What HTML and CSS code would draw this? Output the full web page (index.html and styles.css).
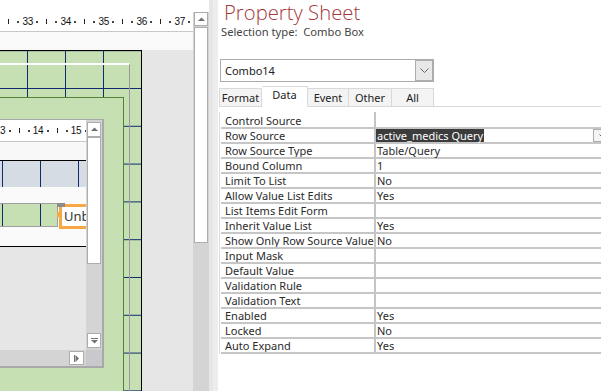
FILE: index.html
```html
<!DOCTYPE html>
<html>
<head>
<meta charset="utf-8">
<link rel="stylesheet" href="styles.css">
</head>
<body>
<div class="app">
  <div class="designer">
    <div class="topstrip"></div>
    <div class="dbody">
      <div class="dmain">
        <div class="ruler main-ruler">
          <span class="rc rstart"><i class="tk"></i></span><span class="rc"><i class="dt"></i></span><span class="rc num">33</span><span class="rc"><i class="dt"></i></span>
          <span class="rc"><i class="tk"></i></span><span class="rc"><i class="dt"></i></span><span class="rc num">34</span><span class="rc"><i class="dt"></i></span>
          <span class="rc"><i class="tk"></i></span><span class="rc"><i class="dt"></i></span><span class="rc num">35</span><span class="rc"><i class="dt"></i></span>
          <span class="rc"><i class="tk"></i></span><span class="rc"><i class="dt"></i></span><span class="rc num">36</span><span class="rc"><i class="dt"></i></span>
          <span class="rc"><i class="tk"></i></span><span class="rc"><i class="dt"></i></span><span class="rc num">37</span><span class="rc"><i class="dt"></i></span>
        </div>
        <div class="hdrbar"></div>
        <div class="canvasrow">
          <div class="canvas">
            <div class="boxb">
              <div class="boxc">
                <div class="subwin">
                  <div class="swtop">
                    <div class="swcontent">
                      <div class="ruler sub-ruler">
                        <span class="rc rstart"><i class="tk"></i></span><span class="rc"><i class="dt"></i></span><span class="rc num">13</span><span class="rc"><i class="dt"></i></span>
                        <span class="rc"><i class="tk"></i></span><span class="rc"><i class="dt"></i></span><span class="rc num">14</span><span class="rc"><i class="dt"></i></span>
                        <span class="rc"><i class="tk"></i></span><span class="rc"><i class="dt"></i></span><span class="rc num">15</span><span class="rc"><i class="dt"></i></span>
                      </div>
                      <div class="swhdr"></div>
                      <div class="swband"></div>
                      <div class="swgap"></div>
                      <div class="swctl">
                        <div class="lbl"></div>
                        <div class="txtbox">Unbound</div>
                        <span class="hmove"></span>
                        <span class="hleft"></span>
                      </div>
                      <div class="swgap2"></div>
                      <div class="swempty"></div>
                    </div>
                    <div class="vsb sub">
                      <div class="sbtn"><svg width="7" height="5" viewBox="0 0 7 5"><path d="M0 4 L3.5 0.5 L7 4 Z" fill="#707070"/></svg></div>
                      <div class="thumb subthumb"></div>
                      <div class="track"></div>
                      <div class="sbtn"><svg width="7" height="6" viewBox="0 0 7 6"><rect x="0" y="0" width="7" height="1" fill="#707070"/><path d="M0 2 L7 2 L3.5 5.5 Z" fill="#707070"/></svg></div>
                    </div>
                  </div>
                  <div class="swbottom">
                    <div class="hsb">
                      <div class="htrack"></div>
                      <div class="sbtn hbtn"><svg width="5" height="7" viewBox="0 0 5 7"><rect x="0" y="0" width="1" height="7" fill="#707070"/><path d="M1.5 0 L5 3.5 L1.5 7 Z" fill="#707070"/></svg></div>
                    </div>
                    <div class="corner"></div>
                  </div>
                </div>
              </div>
            </div>
          </div>
          <div class="outside"></div>
        </div>
      </div>
      <div class="vsb mainsb">
        <div class="sbtn"><svg width="7" height="5" viewBox="0 0 7 5"><path d="M0 4 L3.5 0.5 L7 4 Z" fill="#707070"/></svg></div>
        <div class="thumb mainthumb"></div>
        <div class="track"></div>
      </div>
    </div>
  </div>
  <div class="splitter"></div>
  <div class="props">
    <div class="ptitle">Property Sheet</div>
    <div class="seltype">Selection type:&nbsp; Combo Box</div>
    <div class="combo">
      <span class="ctext">Combo14</span>
      <span class="cbtn"><svg width="9" height="5" viewBox="0 0 9 5"><path d="M0.5 0.5 L4.5 4.5 L8.5 0.5" fill="none" stroke="#666" stroke-width="1"/></svg></span>
    </div>
    <div class="tabs">
      <div class="tab tw-format">Format</div>
      <div class="tab active tw-data">Data</div>
      <div class="tab tw-event">Event</div>
      <div class="tab tw-other">Other</div>
      <div class="tab tw-all">All</div>
      <div class="tabfill"></div>
    </div>
    <div class="grid">
      <div class="row"><div class="pn">Control Source</div><div class="pv"></div></div>
      <div class="row"><div class="pn">Row Source</div><div class="pv edit"><span class="sel">active_medics Query</span><span class="vfill"></span><span class="vbtn"><svg width="7" height="4" viewBox="0 0 7 4"><path d="M0.5 0.5 L3.5 3.5 L6.5 0.5" fill="none" stroke="#666" stroke-width="1"/></svg></span></div></div>
      <div class="row"><div class="pn">Row Source Type</div><div class="pv">Table/Query</div></div>
      <div class="row"><div class="pn">Bound Column</div><div class="pv">1</div></div>
      <div class="row"><div class="pn">Limit To List</div><div class="pv">No</div></div>
      <div class="row"><div class="pn">Allow Value List Edits</div><div class="pv">Yes</div></div>
      <div class="row"><div class="pn">List Items Edit Form</div><div class="pv"></div></div>
      <div class="row"><div class="pn">Inherit Value List</div><div class="pv">Yes</div></div>
      <div class="row"><div class="pn">Show Only Row Source Values</div><div class="pv">No</div></div>
      <div class="row"><div class="pn">Input Mask</div><div class="pv"></div></div>
      <div class="row"><div class="pn">Default Value</div><div class="pv"></div></div>
      <div class="row"><div class="pn">Validation Rule</div><div class="pv"></div></div>
      <div class="row"><div class="pn">Validation Text</div><div class="pv"></div></div>
      <div class="row"><div class="pn">Enabled</div><div class="pv">Yes</div></div>
      <div class="row"><div class="pn">Locked</div><div class="pv">No</div></div>
      <div class="row"><div class="pn">Auto Expand</div><div class="pv">Yes</div></div>
    </div>
  </div>
</div>
</body>
</html>
```

FILE: styles.css
```css
* { box-sizing: border-box; margin: 0; padding: 0; }
html, body { width: 601px; height: 391px; overflow: hidden; background: #fff; }
body { font-family: "Noto Sans", "Open Sans", sans-serif; color: #262626; }

.app { display: flex; width: 601px; height: 391px; overflow: hidden; }

/* ---------- designer (left) ---------- */
.designer { width: 209px; flex: none; display: flex; flex-direction: column; background: #fff; }
.topstrip { height: 12px; flex: none; background: #fff; }
.dbody { flex: 1; display: flex; min-height: 0; }
.dmain { width: 193px; flex: none; display: flex; flex-direction: column; overflow: hidden; }

.ruler { flex: none; display: flex; align-items: center; background: #fff; border-bottom: 1px solid #c8c8c8;
  font-family: "Liberation Sans", Arial, sans-serif; font-size: 10px; color: #111; white-space: nowrap; overflow: hidden; }
.main-ruler { height: 20px; }
.main-ruler .rstart { margin-left: 4px; }
.sub-ruler { height: 22px; }
.sub-ruler .rstart { margin-left: -23.75px; }
.rc { flex: none; width: 9.5px; display: flex; justify-content: center; align-items: center; }
.num { overflow: visible; letter-spacing: -0.2px; }
.tk { display: block; width: 1px; height: 5px; background: #222; flex: none; }
.dt { display: block; width: 2px; height: 2px; background: #444; flex: none; }

.hdrbar { height: 18px; flex: none; background: #f9f9f9; }
.canvasrow { flex: 1; display: flex; min-height: 0; }
.outside { flex: 1; background: #e6e6e6; }

.canvas { width: 142px; flex: none; overflow: hidden;
  border-top: 1px solid #000; border-right: 1px solid #000;
  background-color: #c6e0b4;
  background-image:
    linear-gradient(to bottom, #102a6e 0, #102a6e 1px, transparent 1px),
    linear-gradient(to right, #102a6e 0, #102a6e 1px, transparent 1px);
  background-size: 100% 37.8px, 38px 100%;
  background-position: 0 37px, 27px 0;
}
.boxb { margin-top: 12px; width: 130px; height: 340px; border-top: 2px solid #fff; border-right: 1px solid #9a9a9a; }
.boxc { margin-top: 32px; width: 124px; height: 300px; background: #c6e0b4;
  border-top: 1px solid #548235; border-right: 1px solid #548235; }

.subwin { margin-top: 21px; width: 104px; height: 249px; background: #e6e6e6;
  border-top: 1px solid #a9a9a9; border-right: 2px solid #a9a9a9; border-bottom: 2px solid #a9a9a9;
  display: flex; flex-direction: column; }
.swtop { flex: 1; display: flex; min-height: 0; }
.swcontent { width: 86px; flex: none; display: flex; flex-direction: column; overflow: hidden; }
.swhdr { flex: none; background: #f8f8f8; border-bottom: 1px solid #000; height: 19px; }
.swband { height: 26px; flex: none; background-color: #d6dce4;
  background-image: linear-gradient(to right, #102a6e 0, #102a6e 1px, transparent 1px);
  background-size: 38px 100%; background-position: 2px 0; }
.swgap { height: 16px; flex: none; background: #fafafa; }
.swctl { height: 26px; flex: none; display: flex; align-items: flex-start; position: relative; background: #fafafa; }
.lbl { width: 58px; height: 24px; flex: none; background-color: #c6e0b4;
  border-top: 1px solid #9e9e9e; border-bottom: 1px solid #9e9e9e; border-right: 1px solid #9e9e9e;
  background-image: linear-gradient(to right, #102a6e 0, #102a6e 1px, transparent 1px);
  background-size: 38px 100%; background-position: 2px 0; }
.txtbox { margin-top: 1px; margin-left: 1px; width: 40px; height: 25px; flex: none; background: #fff;
  border: 3px solid #f8a646; border-right: none; padding-left: 2px;
  font-family: "Noto Sans", sans-serif; font-size: 13px; line-height: 19px; color: #333; white-space: nowrap; overflow: hidden; }
.hmove { position: absolute; left: 57px; top: 0; width: 8px; height: 4px; background: #8c8c8c; }
.hleft { position: absolute; left: 57px; top: 9px; width: 3px; height: 5px; background: #f8a646; }
.swgap2 { flex: none; background: #fafafa; border-bottom: 1px solid #000; height: 18px; }
.swempty { flex: 1; background: #e6e6e6; }

.vsb { flex: none; width: 16px; background: #d4d4d4; display: flex; flex-direction: column; align-items: center; }
.sbtn { flex: none; width: 14px; height: 15px; background: #fff; border: 1px solid #adadad;
  display: flex; align-items: center; justify-content: center; }
.thumb { flex: none; width: 14px; background: #fff; border: 1px solid #adadad; }
.track { flex: 1; }
.sub { padding: 2px 0; }
.subthumb { height: 127px; }
.mainsb .sbtn { height: 14px; }
.mainthumb { height: 216px; margin-top: 1px; }

.swbottom { height: 16px; flex: none; display: flex; }
.hsb { width: 86px; flex: none; background: #d4d4d4; display: flex; align-items: center; }
.htrack { flex: 1; }
.hbtn { width: 15px; height: 14px; margin-right: 2px; }
.corner { flex: 1; background: #c9c9cd; }

/* ---------- splitter ---------- */
.splitter { width: 4px; flex: none; background: #e6e6e6; }

/* ---------- property sheet ---------- */
.props { flex: 1; min-width: 0; overflow: hidden; background: #fff; border-left: 5px solid #ededed; padding-left: 1px; }
.ptitle { height: 24px; line-height: 24px; padding-left: 5px; font-family: "Open Sans", "Noto Sans", sans-serif;
  font-weight: 300; font-size: 20.3px; color: #a4373a; white-space: nowrap; }
.seltype { margin-top: 1px; height: 14px; line-height: 14px; padding-left: 2px; font-size: 11.2px; color: #444; white-space: nowrap; }

.combo { margin-top: 20px; margin-left: 1px; width: 214px; height: 23px; border: 1px solid #ababab; display: flex; align-items: center; }
.ctext { flex: 1; padding-left: 4px; font-size: 11px; color: #222; }
.cbtn { width: 18px; height: 21px; margin-right: 0; border: 1px solid #adadad; background: #e8e8e8;
  display: flex; align-items: center; justify-content: center; }

.tabs { margin-top: 4px; height: 21px; display: flex; align-items: flex-end; width: 400px; }
.tab { flex: none; height: 19px; background: #f4f4f4; border: 1px solid #d9d9d9; border-left: none;
  font-size: 11px; color: #222; text-align: center; line-height: 17px; }
.tw-format { width: 43px; border-left: 1px solid #d9d9d9; }
.tw-data { width: 46px; }
.tw-event { width: 41px; }
.tw-other { width: 43px; }
.tw-all { width: 42px; }
.tab.active { height: 21px; background: #fff; border-bottom: 1px solid #fff; line-height: 15px; border-left: none; }
.tabfill { flex: 1; height: 1px; background: #d9d9d9; }

.grid { margin-top: 5px; width: 392px; padding-top: 2px; border-left: 1px solid #dcdcdc; padding-left: 1px;
  background: linear-gradient(#c4c4c4, #c4c4c4) 154px 0 / 2px 242px no-repeat; }
.row { display: flex; height: 15px; border-bottom: 2px solid #c6c6c6; font-size: 11px; line-height: 13px; white-space: nowrap; }
.pn { width: 153px; flex: none; padding-left: 4px; overflow: hidden; color: #2a2a2a; }
.pv { flex: 1; margin-left: 2px; padding-left: 1px; color: #2a2a2a; display: flex; }
.pv.edit { padding-left: 0; }
.sel { background: #3c3c3c; color: #fff; padding: 0 1px; }
.vfill { flex: 1; }
.vbtn { width: 18px; height: 13px; border: 1px solid #adadad; background: #f4f4f4; display: flex; align-items: center; justify-content: center; }
```
